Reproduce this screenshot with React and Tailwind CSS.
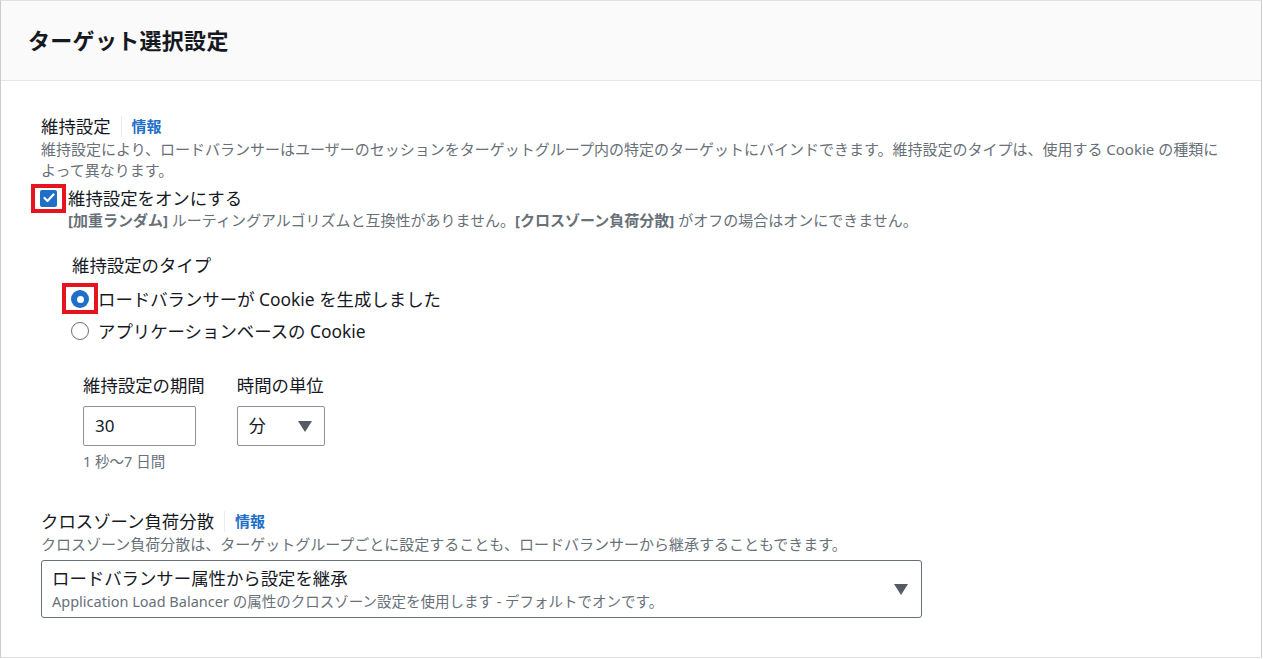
import React from 'react';

const FONT = { fontFamily: '"Noto Sans", "Noto Sans CJK JP", sans-serif' };

function Caret() {
  return (
    <svg width="14" height="11" viewBox="0 0 14 11" className="shrink-0">
      <path d="M0 0 L14 0 L7 11 Z" fill="#545b64" />
    </svg>
  );
}

function InfoLabel({ label }) {
  return (
    <div className="flex items-center h-[24px] text-[17.4px] text-[#16191f]">
      <span>{label}</span>
      <span className="mx-[10px] h-[21px] w-px bg-[#eaeded]" />
      <span className="text-[15px] font-bold text-[#1f6fc9]">情報</span>
    </div>
  );
}

export default function App() {
  return (
    <div className="w-[1263px] h-[659px] bg-white" style={FONT}>
      <div className="h-[658px] w-[1262px] border border-[#dfe2e3] border-l-[#c9cccd] border-r-[#c9cccd]">
        {/* header */}
        <div className="h-[80px] bg-[#fafafa] border-b border-[#e4e7e8] flex items-center pl-[27px]">
          <h2 className="text-[22px] font-bold text-[#16191f] tracking-[0.3px]">ターゲット選択設定</h2>
        </div>

        <div className="pl-[39px] pr-[28px] pt-[33px]">
          {/* stickiness */}
          <div className="pl-px">
            <InfoLabel label="維持設定" />
            <p className="mt-[1px] text-[15px] leading-[21px] text-[#687078]">
              維持設定により、ロードバランサーはユーザーのセッションをターゲットグループ内の特定のターゲットにバインドできます。維持設定のタイプは、使用する Cookie の種類によって異なります。
            </p>
          </div>

          <div className="mt-[5px] flex items-start">
            <div className="relative w-[17px] h-[24px] flex items-center">
              <span className="w-[17px] h-[17px] rounded-[2px] bg-[#1f6fc9] flex items-center justify-center">
                <svg width="12" height="10" viewBox="0 0 12 10">
                  <path d="M1.5 5 L4.5 8 L10.5 1.5" fill="none" stroke="white" strokeWidth="2.2" strokeLinecap="round" strokeLinejoin="round" />
                </svg>
              </span>
              <span className="absolute left-[-9px] top-[-2px] w-[35px] h-[29px] border-[4px] border-[#e5141e]" />
            </div>
            <div className="ml-[11px]">
              <div className="text-[17.4px] leading-[24px] text-[#16191f]">維持設定をオンにする</div>
              <div className="text-[15px] leading-[21px] text-[#687078]">
                <b className="font-bold">[加重ランダム]</b> ルーティングアルゴリズムと互換性がありません。<b className="font-bold">[クロスゾーン負荷分散]</b> がオフの場合はオンにできません。
              </div>
            </div>
          </div>

          {/* stickiness type */}
          <div className="pl-[31px] mt-[22px]">
            <div className="pl-px text-[17.4px] leading-[24px] text-[#16191f]">維持設定のタイプ</div>
            <div className="mt-[6px] flex flex-col">
              <div className="h-[32px] flex items-center">
                <div className="relative w-[18px] h-[18px]">
                  <span className="w-[18px] h-[18px] rounded-full bg-[#1f6fc9] flex items-center justify-center">
                    <span className="w-[7px] h-[7px] rounded-full bg-white" />
                  </span>
                  <span className="absolute left-[-9px] top-[-7px] w-[36px] h-[31px] border-[4px] border-[#e5141e]" />
                </div>
                <span className="ml-[9px] text-[17.4px] text-[#16191f]">ロードバランサーが Cookie を生成しました</span>
              </div>
              <div className="h-[32px] flex items-center">
                <span className="w-[18px] h-[18px] rounded-full border-[1.5px] border-[#687078] bg-white" />
                <span className="ml-[9px] text-[17.4px] text-[#16191f]">アプリケーションベースの Cookie</span>
              </div>
            </div>
          </div>

          {/* duration */}
          <div className="pl-[43px] mt-[26px]">
            <div className="flex gap-[32px]">
              <div className="flex flex-col">
                <div className="text-[17.4px] leading-[24px] text-[#16191f]">維持設定の期間</div>
                <div className="mt-[9px] w-[113px] h-[40px] border border-[#8d9396] rounded-[2px] flex items-center pl-[11px] text-[17px] text-[#16191f]">
                  30
                </div>
              </div>
              <div className="flex flex-col">
                <div className="text-[17.4px] leading-[24px] text-[#16191f]">時間の単位</div>
                <div className="mt-[9px] w-[88px] h-[40px] border border-[#8d9396] rounded-[2px] flex items-center justify-between pl-[11px] pr-[12px] text-[17px] text-[#16191f]">
                  <span>分</span>
                  <Caret />
                </div>
              </div>
            </div>
            <div className="mt-[5px] text-[14.5px] leading-[20px] text-[#687078]">1 秒～7 日間</div>
          </div>

          {/* cross zone */}
          <div className="pl-px mt-[38px]">
            <InfoLabel label="クロスゾーン負荷分散" />
            <p className="mt-[1px] text-[15px] leading-[21px] text-[#687078]">
              クロスゾーン負荷分散は、ターゲットグループごとに設定することも、ロードバランサーから継承することもできます。
            </p>
            <div className="mt-[5px] w-[881px] h-[58px] border border-[#687078] rounded-[3px] flex items-center justify-between pl-[10px] pr-[13px]">
              <div className="flex flex-col">
                <span className="text-[17.4px] leading-[23px] text-[#16191f]">ロードバランサー属性から設定を継承</span>
                <span className="text-[14.5px] leading-[22px] text-[#687078]">Application Load Balancer の属性のクロスゾーン設定を使用します - デフォルトでオンです。</span>
              </div>
              <Caret />
            </div>
          </div>
        </div>
      </div>
    </div>
  );
}
